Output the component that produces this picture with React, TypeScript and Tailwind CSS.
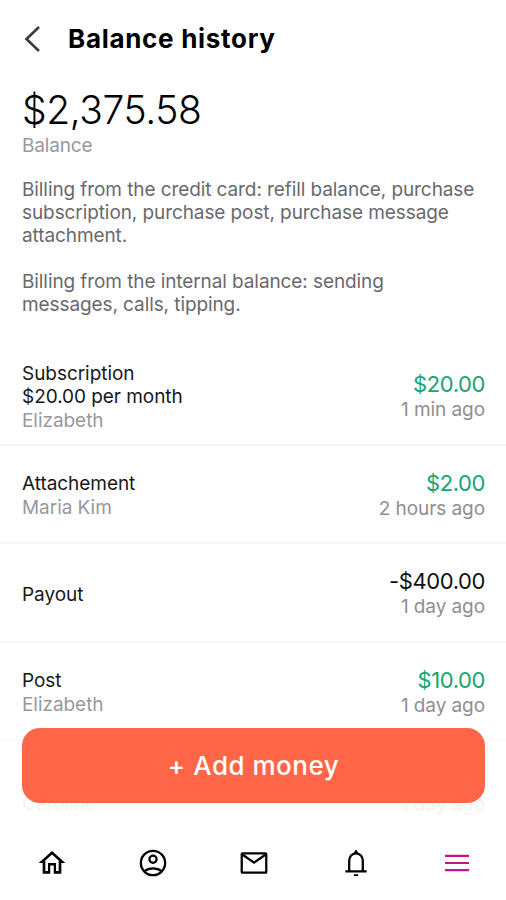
import type { ReactNode } from "react";

const icons = {
  home: (
    <path
      d="M12 5.690l5 4.500V18h-2v-6H9v6H7v-7.810l5-4.500M12 3L2 12h3v8h5.700v-6.200h2.600V20H19v-8h3L12 3z"
      fill="currentColor"
      stroke="none"
    />
  ),
  account: (
    <>
      <circle cx="12" cy="12" r="9.100" />
      <circle cx="12" cy="9.200" r="2.700" />
      <path d="M5.600 18.200c3.300-3 9.500-3 12.800 0" />
    </>
  ),
  mail: (
    <>
      <rect x="2.800" y="4.700" width="18.400" height="14.600" rx="0.600" />
      <path d="M3 5.400l9 6.300 9-6.300" />
    </>
  ),
  bell: (
    <>
      <path d="M4 18.300h16M6.900 18V10.200c0-3 2.100-5.500 5.100-5.500s5.100 2.500 5.100 5.500V18" />
      <path d="M10.900 4.300L12 2.700l1.100 1.600z" fill="currentColor" strokeWidth="1" />
      <path d="M10.400 21.100h3.200" strokeWidth="1.300" />
    </>
  ),
  menu: <path d="M3 6.700h18M3 12h18M3 17.300h18" strokeWidth="1.600" />,
} satisfies Record<string, ReactNode>;

type IconName = keyof typeof icons;

function Icon({ name }: { name: IconName }) {
  return (
    <svg viewBox="0 0 24 24" className="h-8 w-8" fill="none" stroke="currentColor" strokeWidth="1.700">
      {icons[name]}
    </svg>
  );
}

type Entry = {
  title: string;
  detail?: string;
  name?: string;
  amount: string;
  time: string;
  income?: boolean;
};

const entries: Entry[] = [
  { title: "Subscription", detail: "$20.00 per month", name: "Elizabeth", amount: "$20.00", time: "1 min ago", income: true },
  { title: "Attachement", name: "Maria Kim", amount: "$2.00", time: "2 hours ago", income: true },
  { title: "Payout", amount: "-$400.00", time: "1 day ago" },
  { title: "Post", name: "Elizabeth", amount: "$10.00", time: "1 day ago", income: true },
  { title: "Post", name: "Caroline", amount: "$10.00", time: "1 day ago", income: true },
];

const tabs: IconName[] = ["home", "account", "mail", "bell", "menu"];

function Row({ entry }: { entry: Entry }) {
  return (
    <li className="flex h-[98.6px] items-center justify-between border-b-2 border-[#f5f5f6] pt-[3px] pr-[21px] pl-[22px]">
      <div className={"text-[19px] leading-[23px] tracking-[-0.05px] text-[#18181a]" + (entry.name ? "" : " pt-[2px]")}>
        <div>{entry.title}</div>
        {entry.detail && <div>{entry.detail}</div>}
        {entry.name && <div className="mt-px text-[#98989d]">{entry.name}</div>}
      </div>
      <div className="pt-px text-right">
        <div
          className={
            "text-[22px] leading-[26px] tracking-[-0.4px] " + (entry.income ? "text-[#16a571]" : "text-[#111]")
          }
        >
          {entry.amount}
        </div>
        <div className="text-[19px] leading-[26px] tracking-[-0.080px] text-[#8e8e93]">{entry.time}</div>
      </div>
    </li>
  );
}

export default function App() {
  return (
    <div className="relative flex h-[900px] w-[506px] flex-col overflow-hidden bg-white font-['Inter',sans-serif]">
      <header className="flex h-[77px] shrink-0 items-center pl-[23px]">
        <svg viewBox="0 0 18 28" className="h-[28px] w-[18px]" fill="none" stroke="#3a3a3c" strokeWidth="2.600">
          <path d="M16 2L3.500 14 16 26" />
        </svg>
        <h1 className="ml-[27px] text-[26px] leading-8 font-bold tracking-[0.700px] text-black">Balance history</h1>
      </header>

      <section className="h-[270px] shrink-0 px-[22px] pt-[11px]">
        <div className="text-[39px] leading-[44px] font-light tracking-[-0.400px] text-black">$2,375.58</div>
        <div className="mt-px text-[19px] leading-[25px] tracking-[-0.15px] text-[#98989d]">Balance</div>
        <div className="mt-[20px] text-[19px] leading-[23px] tracking-[-0.090px] whitespace-nowrap text-[#69696d]">
          <p>
            Billing from the credit card: refill balance, purchase
            <br />
            subscription, purchase post, purchase message
            <br />
            attachment.
          </p>
          <p className="mt-[23px]">
            Billing from the internal balance: sending
            <br />
            messages, calls, tipping.
          </p>
        </div>
      </section>

      <ul className="shrink-0">
        {entries.map((entry, i) => (
          <Row key={i} entry={entry} />
        ))}
      </ul>

      {/* Bottom bar floats over the list and fades it out */}
      <div className="absolute inset-x-0 bottom-0 flex h-[172px] flex-col bg-linear-to-b from-white/40 via-white/90 via-45% to-white pr-[21px] pl-[22px]">
        <button className="h-[75px] w-full shrink-0 rounded-[18px] bg-[#ff6648] text-[26px] font-medium tracking-[0.500px] text-white">
          + Add money
        </button>
        <nav className="mt-[44px] -mr-[23px] -ml-[21px] grid grid-cols-5 justify-items-center text-black">
          {tabs.map((tab) => (
            <a key={tab} href="#" className={tab === "menu" ? "text-[#c71585]" : ""}>
              <Icon name={tab} />
            </a>
          ))}
        </nav>
      </div>
    </div>
  );
}
